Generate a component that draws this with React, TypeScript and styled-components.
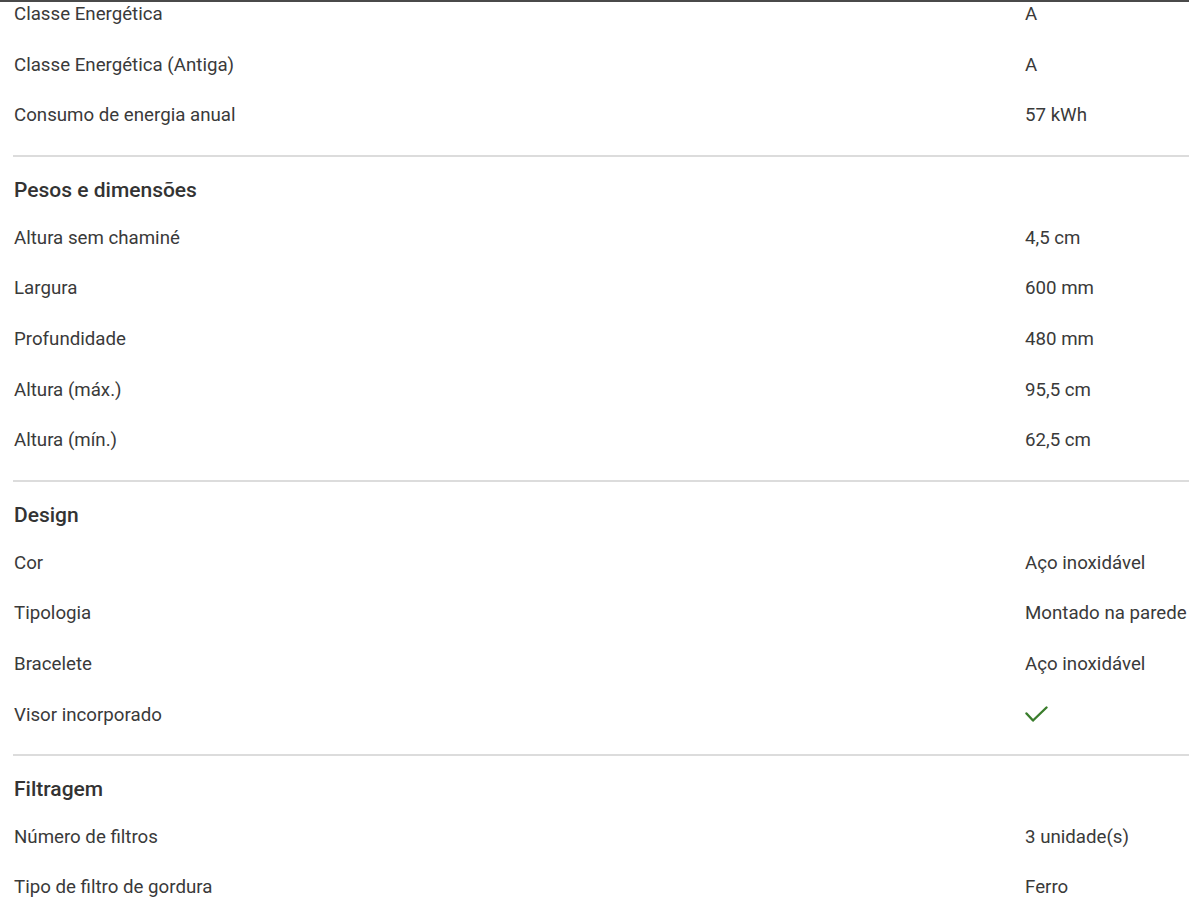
import React from 'react'
import styled, { createGlobalStyle } from 'styled-components'

type Spec = { label: string; value?: string; check?: boolean }
type Section = { title?: string; rows: Spec[] }

const sections: Section[] = [
  {
    rows: [
      { label: 'Classe Energética', value: 'A' },
      { label: 'Classe Energética (Antiga)', value: 'A' },
      { label: 'Consumo de energia anual', value: '57 kWh' },
    ],
  },
  {
    title: 'Pesos e dimensões',
    rows: [
      { label: 'Altura sem chaminé', value: '4,5 cm' },
      { label: 'Largura', value: '600 mm' },
      { label: 'Profundidade', value: '480 mm' },
      { label: 'Altura (máx.)', value: '95,5 cm' },
      { label: 'Altura (mín.)', value: '62,5 cm' },
    ],
  },
  {
    title: 'Design',
    rows: [
      { label: 'Cor', value: 'Aço inoxidável' },
      { label: 'Tipologia', value: 'Montado na parede' },
      { label: 'Bracelete', value: 'Aço inoxidável' },
      { label: 'Visor incorporado', check: true },
    ],
  },
  {
    title: 'Filtragem',
    rows: [
      { label: 'Número de filtros', value: '3 unidade(s)' },
      { label: 'Tipo de filtro de gordura', value: 'Ferro' },
    ],
  },
]

function CheckIcon() {
  return (
    <svg width="24" height="24" viewBox="0 0 24 24" fill="none">
      <polyline
        points="1.5 10.5 8 17.5 21.5 4.5"
        stroke="#3a7d2c"
        strokeWidth="2.4"
        strokeLinecap="round"
        strokeLinejoin="round"
      />
    </svg>
  )
}

function App() {
  return (
    <Page>
      <GlobalStyle />
      <TopBar />
      <List>
        {sections.map((section, i) => (
          <Group key={i} $first={i === 0}>
            {section.title && <Title>{section.title}</Title>}
            {section.rows.map((row) => (
              <Row key={row.label}>
                <Label>{row.label}</Label>
                <Value>{row.check ? <CheckIcon /> : row.value}</Value>
              </Row>
            ))}
          </Group>
        ))}
      </List>
    </Page>
  )
}

const GlobalStyle = createGlobalStyle`
  html, body {
    margin: 0;
    padding: 0;
    background: #fff;
    overflow: hidden;
  }
  body {
    font-family: Roboto, 'Liberation Sans', sans-serif;
    color: #3a3a3a;
  }
`

const Page = styled.div`
  width: 1189px;
  height: 904px;
  overflow: hidden;
`

const TopBar = styled.div`
  position: relative;
  z-index: 1;
  height: 2px;
  background: #4a4a4a;
`

const List = styled.div`
  margin-top: -13.35px;
  padding-left: 13px;
`

const Group = styled.div<{ $first: boolean }>`
  border-top: ${(p) => (p.$first ? 'none' : '2px solid #dcdcdc')};
  margin-top: ${(p) => (p.$first ? '0' : '14.5px')};
`

const Title = styled.div`
  padding: 19px 0 8px 1px;
  font-size: 21px;
  line-height: 28px;
  font-weight: 500;
  color: #333;
`

const Row = styled.div`
  display: grid;
  grid-template-columns: 1fr 164px;
  align-items: center;
  height: 50.7px;
  font-size: 18.7px;
`

const Label = styled.span`
  padding-left: 1px;
  white-space: nowrap;
`

const Value = styled.span`
  display: flex;
  align-items: center;
  white-space: nowrap;
`

export default App
